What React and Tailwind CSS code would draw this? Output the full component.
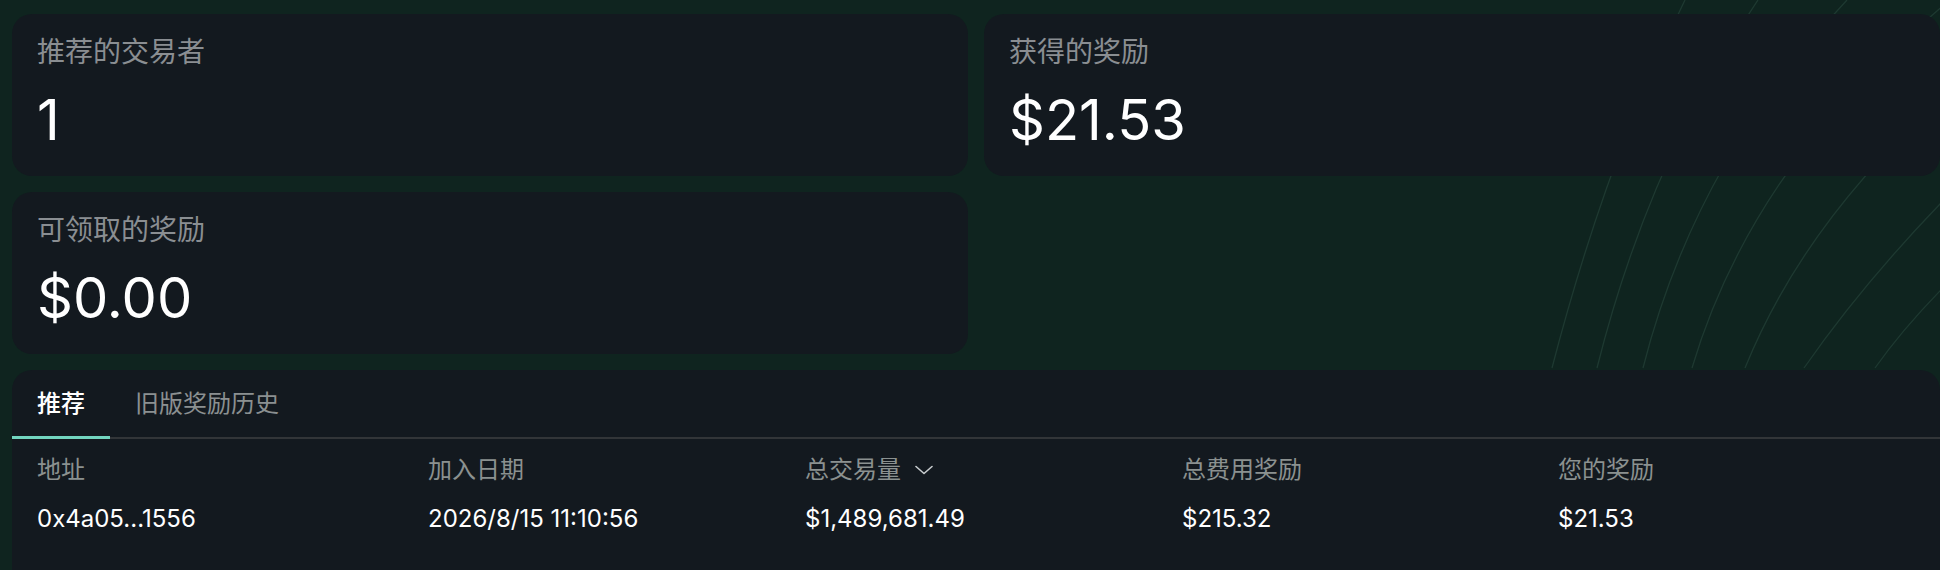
import { useState } from 'react';

const stats = [
  { label: '推荐的交易者', value: '1' },
  { label: '获得的奖励', value: '$21.53' },
  { label: '可领取的奖励', value: '$0.00' },
];

const columns = ['地址', '加入日期', '总交易量', '总费用奖励', '您的奖励'];

const rows = [
  { address: '0x4a05...1556', joined: '2026/8/15 11:10:56', volume: '$1,489,681.49', fees: '$215.32', reward: '$21.53' },
];

// decorative arcs behind the cards
const arcs = [
  'M1685,0 Q1605.5,162 1552,368',
  'M1758,0 Q1648.5,162 1597,368',
  'M1847,0 Q1695,162 1643,368',
  'M1950,0 Q1753,162 1692,368',
  'M2070,0 Q1828.5,162 1745,368',
  'M2060,90 Q1900,230 1804,368',
  'M2040,200 Q1930,290 1875,368',
];

function StatCard({ label, value }) {
  return (
    <div className="rounded-[20px] bg-[#13191f] px-[25px] pt-5 pb-[22px]">
      <p className="text-[28px] leading-[36px] text-[#8a8e92]">{label}</p>
      <p className="mt-4 text-[56px] leading-[68px] text-white">{value}</p>
    </div>
  );
}

export default function App() {
  const [tab, setTab] = useState(0);
  const tabs = ['推荐', '旧版奖励历史'];

  return (
    <div className="relative h-[570px] w-[1940px] overflow-hidden bg-[#0f241f] font-['Inter','Noto_Sans_CJK_SC',sans-serif]">
      <svg className="absolute left-0 top-0" width="1940" height="570" viewBox="0 0 1940 570" fill="none">
        {arcs.map((d, i) => (
          <path key={i} d={d} stroke="#1e3931" strokeWidth="1.3" />
        ))}
      </svg>

      <div className="relative grid grid-cols-2 gap-4 pl-3 pt-[14px]">
        {stats.map(s => (
          <StatCard key={s.label} {...s} />
        ))}

        {/* Table */}
        <div className="col-span-2 min-h-[220px] rounded-t-[20px] bg-[#13191f]">
          <div className="flex border-b-2 border-[#323538]">
            {tabs.map((t, i) => (
              <button
                key={t}
                onClick={() => setTab(i)}
                className={
                  i === tab
                    ? '-mb-[2px] h-[69px] border-b-[3px] border-[#72d5bf] px-[25px] pt-[2px] text-[24px] font-medium text-white'
                    : '-mb-[2px] h-[69px] border-b-[3px] border-transparent px-[25px] pt-[2px] text-[24px] text-[#8b9091]'
                }
              >
                {t}
              </button>
            ))}
          </div>

          <div className="pl-[25px] pt-[13px]">
            <div className="grid h-[36px] grid-cols-[391px_377px_377px_376px_1fr] items-center text-[24px] text-[#8b9190]">
              {columns.map(c => (
                <div key={c} className="flex items-center">
                  {c}
                  {c === '总交易量' && (
                    <svg className="ml-[14px]" width="18" height="10" viewBox="0 0 18 10" fill="none">
                      <path d="M1 1.5 L9 8.5 L17 1.5" stroke="#c9cdcf" strokeWidth="1.6" strokeLinecap="round" strokeLinejoin="round" />
                    </svg>
                  )}
                </div>
              ))}
            </div>

            {rows.map(r => (
              <div key={r.address} className="mt-[13px] grid h-[36px] grid-cols-[391px_377px_377px_376px_1fr] items-center text-[24px] text-white">
                <div>{r.address}</div>
                <div>{r.joined}</div>
                <div>{r.volume}</div>
                <div>{r.fees}</div>
                <div>{r.reward}</div>
              </div>
            ))}
          </div>
        </div>
      </div>
    </div>
  );
}
